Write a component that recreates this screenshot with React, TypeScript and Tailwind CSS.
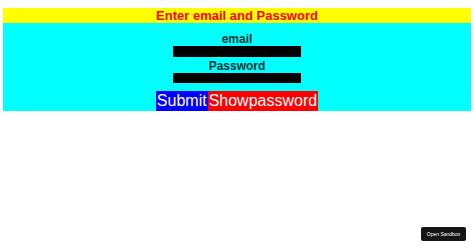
export default function App() {
  return (
    <div className="w-[474px] h-[248px] bg-white relative" style={{ fontFamily: '"Liberation Sans", Arial, sans-serif' }}>
      <div className="pt-[8px] px-[3px]">
        <div className="bg-[#ffff00] h-[15px] flex items-center justify-center">
          <span className="text-[#ff0000] font-bold text-[13px] leading-none">Enter email and Password</span>
        </div>
        <div className="bg-[#00ffff] h-[88px] flex flex-col items-center pt-[9px]">
          <div className="text-[12px] font-bold leading-[14px] text-[#003030]">email</div>
          <div className="w-[128px] h-[11px] bg-black"></div>
          <div className="text-[12px] font-bold leading-[14px] mt-[2px] text-[#003030]">Password</div>
          <div className="w-[128px] h-[11px] bg-black"></div>
          <div className="flex mt-[8px]">
            <div className="bg-[#0000ff] text-white text-[16px] leading-[20px] px-[1px] h-[20px]">Submit</div>
            <div className="bg-[#ff0000] text-white text-[16px] leading-[20px] px-[1px] h-[20px]">Showpassword</div>
          </div>
        </div>
      </div>
      <div className="absolute left-[421px] top-[227px] w-[45px] h-[14px] bg-[#151515] rounded-[2px] flex items-center justify-center">
        <span className="text-white text-[5px] leading-none">Open Sandbox</span>
      </div>
    </div>
  );
}
